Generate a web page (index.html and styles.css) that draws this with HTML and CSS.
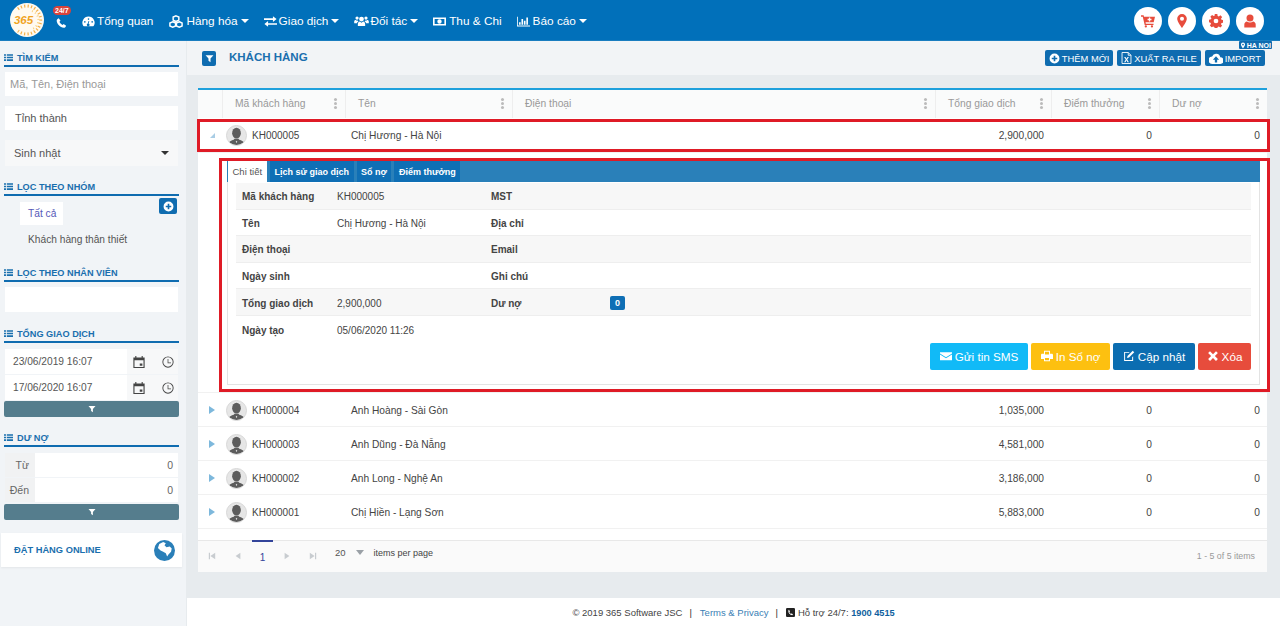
FILE: index.html
```html
<!DOCTYPE html>
<html lang="vi">
<head>
    <meta charset="UTF-8">
    <meta name="viewport" content="width=device-width, initial-scale=1.0">
    <title>Khách hàng</title>
    <link rel="stylesheet" href="styles.css">
</head>
<body>
    <svg class="sprite" aria-hidden="true">
        <symbol id="i-list" viewBox="0 0 16 16"><path d="M0 2h3.500v3H0zM5 2h11v3H5zM0 6.500h3.500v3H0zM5 6.500h11v3H5zM0 11h3.500v3H0zM5 11h11v3H5z"/></symbol>
        <symbol id="i-filter" viewBox="0 0 16 16"><path d="M1 2h14L9.800 8v6.500L6.200 12V8z"/></symbol>
        <symbol id="i-plus" viewBox="0 0 16 16"><path fill-rule="evenodd" d="M8 .8a7.200 7.200 0 1 0 0 14.400A7.200 7.200 0 0 0 8 .8zM6.800 4h2.400v2.800H12v2.400H9.200V12H6.800V9.200H4V6.800h2.800z"/></symbol>
        <symbol id="i-gauge" viewBox="0 0 16 16"><path fill-rule="evenodd" d="M8 2a7.500 7.500 0 0 0-6.500 11.300c.2.300.4.400.7.400h11.600c.3 0 .5-.1.700-.4A7.500 7.500 0 0 0 8 2zM3.500 9.500a1 1 0 1 1 0-2 1 1 0 0 1 0 2zM8 6a1 1 0 1 1 0-2 1 1 0 0 1 0 2zm1.300 5.600a1.700 1.700 0 1 1-2.200-1.200l.9-3 1 .3-.9 3c.5.100.9.400 1.200.9zM12.500 9.500a1 1 0 1 1 0-2 1 1 0 0 1 0 2z"/></symbol>
        <symbol id="i-cubes" viewBox="0 0 18 16"><path fill="none" stroke="currentColor" stroke-width="1.800" d="M9 1l3.500 1.500v3.800L9 7.800 5.500 6.300V2.500zM5 8.300l3.500 1.500v3.800L5 15l-3.500-1.400V9.800zM13 8.300l3.500 1.500v3.800L13 15l-3.500-1.400V9.800z"/></symbol>
        <symbol id="i-exchange" viewBox="0 0 16 16"><path d="M0 4h11V1.500L15.500 5 11 8.500V6H0zM16 10H5V7.500L.5 11 5 14.500V12h11z"/></symbol>
        <symbol id="i-users" viewBox="0 0 18 16"><circle cx="9" cy="5" r="3"/><circle cx="3.500" cy="3.800" r="2"/><circle cx="14.500" cy="3.800" r="2"/><path d="M4.500 13.500V11c0-1.800 1.200-3 2.500-3l2 1.500L11 8c1.300 0 2.500 1.200 2.500 3v2.500zM0 10V8c0-1 .8-1.800 1.700-1.800l1.800 1 1-.3c.2.400.4.700.7 1C4 8.500 3.400 9.200 3.400 10zM18 10V8c0-1-.8-1.800-1.700-1.800l-1.800 1-1-.3c-.2.400-.4.700-.7 1 1.200.6 1.800 1.300 1.800 2.100z"/></symbol>
        <symbol id="i-money" viewBox="0 0 16 16"><path fill-rule="evenodd" d="M0 3h16v10H0zm2 2v6h12V5zm6 .300a2.700 2.700 0 1 1 0 5.400 2.700 2.700 0 0 1 0-5.400z"/></symbol>
        <symbol id="i-chart" viewBox="0 0 16 16"><path d="M0 2h1v11h15v1H0zM2.500 9h2v3h-2zM5.500 5h2v7h-2zM8.500 7h2v5h-2zM11.500 3h2v9h-2z"/></symbol>
        <symbol id="i-phone" viewBox="0 0 16 16"><path d="M4 1l2.600 3.600L5 6.200c.8 2 2.200 3.500 4.600 4.800l1.500-1.500 3.600 2.500c-.4 1.600-1.800 3-3.300 3C6 15 1 9 1 4.500 1 3 2.400 1.500 4 1z"/></symbol>
        <symbol id="i-cart" viewBox="0 0 16 16"><path d="M0 1.500h3l.4 1.500H16l-1.500 6.500H5.200l.3 1.500h8.800v1.500H4.200L2 3H0zM9 4v1.500H7.500V7H9v1.500h1.500V7H12V5.500h-1.500V4z"/><circle cx="5.500" cy="14.200" r="1.300"/><circle cx="12.500" cy="14.200" r="1.300"/></symbol>
        <symbol id="i-marker" viewBox="0 0 16 16"><path fill-rule="evenodd" d="M8 0a5.500 5.500 0 0 0-5.500 5.500C2.500 9 8 16 8 16s5.500-7 5.500-10.500A5.500 5.500 0 0 0 8 0zm0 3.200a2.300 2.300 0 1 1 0 4.600 2.300 2.300 0 0 1 0-4.600z"/></symbol>
        <symbol id="i-cog" viewBox="0 0 16 16"><path fill-rule="evenodd" d="M6.500 0h3l.4 2.200 1.300.6L13 1.500l2 2-1.300 1.800.6 1.300 2.200.4v3l-2.200.4-.6 1.300 1.300 1.800-2 2-1.800-1.300-1.300.6-.4 2.200h-3l-.4-2.200-1.300-.6L3 15l-2-2 1.300-1.800-.6-1.300L0 9.500v-3l2.200-.4.6-1.300L1.500 3l2-2 1.800 1.300 1.300-.6zM8 5.300a2.700 2.700 0 1 0 0 5.400 2.700 2.700 0 0 0 0-5.400z"/></symbol>
        <symbol id="i-user" viewBox="0 0 16 16"><circle cx="8" cy="4.500" r="4"/><path d="M1.500 15.500V12c0-2 1.500-3.500 3-3.500C5.500 9.300 6.700 9.800 8 9.800s2.500-.5 3.500-1.300c1.500 0 3 1.500 3 3.500v3.500z"/></symbol>
        <symbol id="i-excel" viewBox="0 0 16 18"><path fill="none" stroke="currentColor" stroke-width="1.300" d="M1.500 1h9l4 4v12h-13zM10.500 1v4h4"/><path d="M4.500 7.500h2l1.500 2.500 1.500-2.500h2L9 11l2.500 4h-2L8 12.300 6.500 15h-2L7 11z"/></symbol>
        <symbol id="i-cloud" viewBox="0 0 18 14"><path fill-rule="evenodd" d="M14.500 5.500A5.500 5.500 0 0 0 4 4.300 4.500 4.500 0 0 0 4.500 14h10a4.200 4.200 0 0 0 0-8.500zM9 4l4 4.500h-2.500V12h-3V8.500H5z"/></symbol>
        <symbol id="i-calendar" viewBox="0 0 16 16"><path fill-rule="evenodd" d="M3 0h1.500v2h7V0H13v2h2.500v14H.5V2H3zM2 5.500V14.500h12V5.500zM9 10h3.500v3H9z"/></symbol>
        <symbol id="i-clock" viewBox="0 0 16 16"><path fill-rule="evenodd" d="M8 .5a7.500 7.500 0 1 0 0 15 7.500 7.500 0 0 0 0-15zm0 1.200a6.300 6.300 0 1 1 0 12.600A6.300 6.300 0 0 1 8 1.700zM7.500 4h1v4.500H12v1H7.500z"/></symbol>
        <symbol id="i-globe" viewBox="0 0 16 16"><circle cx="8" cy="8" r="8"/><path fill="white" d="M4 3l3-1.500 2 1-1 1.500 1.500 1.500 2.500-.5 1.500 1.500-.5 2.500-2 2-1 1.500-1-2.500-2-1L5 8 3 6z"/></symbol>
        <symbol id="i-mail" viewBox="0 0 16 16"><path d="M0 3h16v1.500L8 9.500 0 4.500zM0 6l8 5 8-5v7.500H0z"/></symbol>
        <symbol id="i-print" viewBox="0 0 16 16"><path fill-rule="evenodd" d="M4 1h8v4h2.500c.8 0 1.500.7 1.500 1.500V12h-4v3H4v-3H0V6.500C0 5.700.7 5 1.500 5H4zm1.300 1.300V6h5.400V2.300zm0 8.200v3.200h5.400v-3.200z"/></symbol>
        <symbol id="i-edit" viewBox="0 0 16 16"><path d="M2.500 2.500H9L7.700 3.800H2.800v9.400h9.400V9.500l1.300-1.300v6.300h-12v-12zM13 1l2 2-7 7-2.600.6L6 8z"/></symbol>
        <symbol id="i-times" viewBox="0 0 16 16"><path d="M4 1.500L8 5.500l4-4L14.500 4l-4 4 4 4-2.500 2.500-4-4-4 4L1.500 12l4-4-4-4z"/></symbol>
        <symbol id="i-face" viewBox="0 0 24 24"><ellipse cx="12" cy="9" rx="5.500" ry="6.800"/><path d="M1 24c1-5 5-5.500 7.500-6.500l1-1.500h5l1 1.500c2.500 1 6.500 1.500 7.500 6.500z"/><path fill="#e6e6e6" d="M11 20l1-1.500 1 1.500-1 1.500z"/></symbol>
        <symbol id="i-first" viewBox="0 0 10 10"><path d="M1 1h1.500v8H1zM9 1v8L3 5z"/></symbol>
        <symbol id="i-prev" viewBox="0 0 10 10"><path d="M8 1v8L2 5z"/></symbol>
        <symbol id="i-next" viewBox="0 0 10 10"><path d="M2 1v8l6-4z"/></symbol>
        <symbol id="i-last" viewBox="0 0 10 10"><path d="M9 1H7.500v8H9zM1 1v8l6-4z"/></symbol>
        <symbol id="i-support" viewBox="0 0 16 16"><path fill-rule="evenodd" d="M2 0h12a2 2 0 0 1 2 2v12a2 2 0 0 1-2 2H2a2 2 0 0 1-2-2V2a2 2 0 0 1 2-2zm3 3L4 5c0 4 3 8 7 8l1.500-1.500-2.500-2-1 1C7.500 10 6.500 9 6 7.500l1-1L5.500 3z"/></symbol>
    </svg>

    <header class="topbar">
        <div class="logo">
            <svg class="logo-dots" viewBox="0 0 34 34"><path fill="none" stroke="#f4b04a" stroke-width="3" stroke-dasharray="1.200 2.200" d="M8 6A14 14 0 1 1 8 28"/><path fill="none" stroke="#f9d27f" stroke-width="2" stroke-dasharray="1 2.500" d="M22 8A9.500 9.500 0 0 1 22 26"/></svg>
            <span class="logo-text">365</span>
        </div>
        <div class="hotline">
            <svg class="hotline-icon"><use href="#i-phone"></use></svg>
            <span class="hotline-badge">24/7</span>
        </div>
        <nav class="nav">
            <a class="nav-item"><svg class="nav-icon"><use href="#i-gauge"></use></svg>Tổng quan</a>
            <a class="nav-item"><svg class="nav-icon wide"><use href="#i-cubes"></use></svg>Hàng hóa<i class="caret"></i></a>
            <a class="nav-item"><svg class="nav-icon"><use href="#i-exchange"></use></svg>Giao dịch<i class="caret"></i></a>
            <a class="nav-item"><svg class="nav-icon users"><use href="#i-users"></use></svg>Đối tác<i class="caret"></i></a>
            <a class="nav-item"><svg class="nav-icon money"><use href="#i-money"></use></svg>Thu &amp; Chi</a>
            <a class="nav-item"><svg class="nav-icon money"><use href="#i-chart"></use></svg>Báo cáo<i class="caret"></i></a>
        </nav>
        <div class="top-actions">
            <span class="round-btn"><svg><use href="#i-cart"></use></svg></span>
            <span class="round-btn"><svg><use href="#i-marker"></use></svg></span>
            <span class="round-btn"><svg><use href="#i-cog"></use></svg></span>
            <span class="round-btn"><svg><use href="#i-user"></use></svg></span>
        </div>
    </header>

    <div class="layout">
        <aside class="sidebar">
            <h3 class="side-title"><svg><use href="#i-list"></use></svg>TÌM KIẾM</h3>
            <div class="field field-search">Mã, Tên, Điện thoại</div>
            <div class="field field-city">Tỉnh thành</div>
            <div class="field field-birthday">Sinh nhật<i class="caret dark"></i></div>

            <h3 class="side-title group-title"><svg><use href="#i-list"></use></svg>LỌC THEO NHÓM</h3>
            <div class="group-body">
                <ul class="group-list">
                    <li class="group-item active">Tất cả</li>
                    <li class="group-item">Khách hàng thân thiết</li>
                </ul>
                <span class="group-add"><svg><use href="#i-plus"></use></svg></span>
            </div>

            <h3 class="side-title staff-title"><svg><use href="#i-list"></use></svg>LỌC THEO NHÂN VIÊN</h3>
            <div class="field field-staff"></div>

            <h3 class="side-title total-title"><svg><use href="#i-list"></use></svg>TỔNG GIAO DỊCH</h3>
            <div class="date-row">
                <span class="date-value">23/06/2019 16:07</span>
                <svg class="date-icon"><use href="#i-calendar"></use></svg>
                <svg class="date-icon"><use href="#i-clock"></use></svg>
            </div>
            <div class="date-row">
                <span class="date-value">17/06/2020 16:07</span>
                <svg class="date-icon"><use href="#i-calendar"></use></svg>
                <svg class="date-icon"><use href="#i-clock"></use></svg>
            </div>
            <button class="filter-btn"><svg><use href="#i-filter"></use></svg></button>

            <h3 class="side-title debt-title"><svg><use href="#i-list"></use></svg>DƯ NỢ</h3>
            <div class="range-row"><span class="range-label">Từ</span><span class="range-value">0</span></div>
            <div class="range-row"><span class="range-label">Đến</span><span class="range-value">0</span></div>
            <button class="filter-btn"><svg><use href="#i-filter"></use></svg></button>

            <div class="online-card">
                <span>ĐẶT HÀNG ONLINE</span>
                <svg><use href="#i-globe"></use></svg>
            </div>
        </aside>

        <main class="main">
            <div class="page-bar">
                <span class="page-filter"><svg><use href="#i-filter"></use></svg></span>
                <h2 class="page-title">KHÁCH HÀNG</h2>
                <div class="page-actions">
                    <span class="branch-badge"><svg><use href="#i-marker"></use></svg>HA NOI</span>
                    <a class="action-btn"><svg><use href="#i-plus"></use></svg>THÊM MỚI</a>
                    <a class="action-btn"><svg class="tall"><use href="#i-excel"></use></svg>XUẤT RA FILE</a>
                    <a class="action-btn"><svg class="cloud"><use href="#i-cloud"></use></svg>IMPORT</a>
                </div>
            </div>

            <section class="grid-card">
                <div class="row head">
                    <div class="cell"></div>
                    <div class="cell">Mã khách hàng<i class="dots"></i></div>
                    <div class="cell">Tên<i class="dots"></i></div>
                    <div class="cell">Điện thoại<i class="dots"></i></div>
                    <div class="cell">Tổng giao dịch<i class="dots"></i></div>
                    <div class="cell">Điểm thưởng<i class="dots"></i></div>
                    <div class="cell">Dư nợ<i class="dots"></i></div>
                </div>

                <div class="row marked">
                    <div class="cell arrow-cell"><i class="arrow open"></i></div>
                    <div class="cell code"><span class="avatar"><svg><use href="#i-face"></use></svg></span>KH000005</div>
                    <div class="cell">Chị Hương - Hà Nội</div>
                    <div class="cell"></div>
                    <div class="cell num">2,900,000</div>
                    <div class="cell num">0</div>
                    <div class="cell num">0</div>
                </div>

                <div class="detail">
                    <div class="tabs">
                        <span class="tab active">Chi tiết</span>
                        <span class="tab">Lịch sử giao dịch</span>
                        <span class="tab">Sổ nợ</span>
                        <span class="tab">Điểm thưởng</span>
                    </div>
                    <div class="tab-panel">
                        <div class="info-row"><b>Mã khách hàng</b><span>KH000005</span><b>MST</b><span></span></div>
                        <div class="info-row"><b>Tên</b><span>Chị Hương - Hà Nội</span><b>Địa chỉ</b><span></span></div>
                        <div class="info-row"><b>Điện thoại</b><span></span><b>Email</b><span></span></div>
                        <div class="info-row"><b>Ngày sinh</b><span></span><b>Ghi chú</b><span></span></div>
                        <div class="info-row"><b>Tổng giao dịch</b><span>2,900,000</span><b>Dư nợ</b><span><em class="debt-badge">0</em></span></div>
                        <div class="info-row"><b>Ngày tạo</b><span>05/06/2020 11:26</span><b></b><span></span></div>
                        <div class="detail-actions">
                            <a class="btn btn-sms"><svg><use href="#i-mail"></use></svg>Gửi tin SMS</a>
                            <a class="btn btn-print"><svg><use href="#i-print"></use></svg>In Sổ nợ</a>
                            <a class="btn btn-update"><svg><use href="#i-edit"></use></svg>Cập nhật</a>
                            <a class="btn btn-delete"><svg><use href="#i-times"></use></svg>Xóa</a>
                        </div>
                    </div>
                </div>

                <div class="row">
                    <div class="cell arrow-cell"><i class="arrow"></i></div>
                    <div class="cell code"><span class="avatar"><svg><use href="#i-face"></use></svg></span>KH000004</div>
                    <div class="cell">Anh Hoàng - Sài Gòn</div>
                    <div class="cell"></div>
                    <div class="cell num">1,035,000</div>
                    <div class="cell num">0</div>
                    <div class="cell num">0</div>
                </div>
                <div class="row">
                    <div class="cell arrow-cell"><i class="arrow"></i></div>
                    <div class="cell code"><span class="avatar"><svg><use href="#i-face"></use></svg></span>KH000003</div>
                    <div class="cell">Anh Dũng - Đà Nẵng</div>
                    <div class="cell"></div>
                    <div class="cell num">4,581,000</div>
                    <div class="cell num">0</div>
                    <div class="cell num">0</div>
                </div>
                <div class="row">
                    <div class="cell arrow-cell"><i class="arrow"></i></div>
                    <div class="cell code"><span class="avatar"><svg><use href="#i-face"></use></svg></span>KH000002</div>
                    <div class="cell">Anh Long - Nghệ An</div>
                    <div class="cell"></div>
                    <div class="cell num">3,186,000</div>
                    <div class="cell num">0</div>
                    <div class="cell num">0</div>
                </div>
                <div class="row">
                    <div class="cell arrow-cell"><i class="arrow"></i></div>
                    <div class="cell code"><span class="avatar"><svg><use href="#i-face"></use></svg></span>KH000001</div>
                    <div class="cell">Chị Hiền - Lạng Sơn</div>
                    <div class="cell"></div>
                    <div class="cell num">5,883,000</div>
                    <div class="cell num">0</div>
                    <div class="cell num">0</div>
                </div>

                <div class="pager">
                    <svg class="pager-icon"><use href="#i-first"></use></svg>
                    <svg class="pager-icon"><use href="#i-prev"></use></svg>
                    <span class="pager-current">1</span>
                    <svg class="pager-icon"><use href="#i-next"></use></svg>
                    <svg class="pager-icon"><use href="#i-last"></use></svg>
                    <span class="pager-size">20<i class="caret gray"></i></span>
                    <span class="pager-label">items per page</span>
                    <span class="pager-info">1 - 5 of 5 items</span>
                </div>
            </section>

            <footer class="footer">
                <span>© 2019 365 Software JSC</span>
                <span class="sep">|</span>
                <a class="footer-link">Terms &amp; Privacy</a>
                <span class="sep">|</span>
                <svg><use href="#i-support"></use></svg>
                <span class="footer-hotline">Hỗ trợ 24/7: <b>1900 4515</b></span>
            </footer>
        </main>
    </div>
</body>
</html>
```

FILE: styles.css
```css
* {
    box-sizing: border-box;
}
html, body {
    height: 100%;
}
body {
    margin: 0;
    display: flex;
    flex-direction: column;
    overflow: hidden;
    font-family: "Liberation Sans", Arial, sans-serif;
    font-size: 10px;
    color: #444;
    background-color: #e7ebee;
}
.sprite {
    display: none;
}
svg {
    fill: currentColor;
}

/* top bar */
.topbar {
    display: flex;
    align-items: center;
    flex: none;
    height: 41px;
    padding: 0 16px 0 10px;
    color: white;
    background-color: #0170ba;
    border-bottom: 1px solid #1a7dbf;
}
.logo {
    display: flex;
    align-items: center;
    justify-content: center;
    position: relative;
    width: 34px;
    height: 34px;
    padding-right: 7px;
    border-radius: 50%;
    background-color: #fffaf0;
}
.logo-dots {
    position: absolute;
    inset: 0;
}
.logo-text {
    position: relative;
    font-size: 11.500px;
    font-weight: bold;
    font-style: italic;
    color: #f0a31e;
}
.hotline {
    position: relative;
    width: 16px;
    height: 20px;
    margin-left: 11px;
}
.hotline-icon {
    display: block;
    width: 11px;
    height: 12px;
    margin: 7px 0 0 1px;
}
.hotline-badge {
    position: absolute;
    top: -4px;
    left: -2px;
    padding: 0 2px;
    font-size: 7px;
    line-height: 9px;
    font-weight: bold;
    border-radius: 5px;
    background-color: #d9433b;
}
.nav {
    display: flex;
    gap: 15px;
    margin: 2px 0 0 11px;
}
.nav-item {
    display: flex;
    align-items: center;
    font-size: 11.800px;
    line-height: 16px;
}
.nav-icon {
    width: 13px;
    height: 13px;
    margin-right: 2px;
}
.nav-icon.wide {
    width: 16px;
}
.nav-icon.users {
    width: 15px;
    margin-right: 1px;
}
.nav-icon.money {
    margin-right: 3px;
}
.caret {
    width: 0;
    height: 0;
    margin-left: 3px;
    border: 4px solid transparent;
    border-top-color: white;
    border-bottom: 0;
}
.caret.dark {
    border-top-color: #333;
}
.caret.gray {
    margin-left: 10px;
    border-top-color: #9aa0a6;
    border-width: 5px 4px 0;
}
.top-actions {
    display: flex;
    gap: 6px;
    margin: 2px 0 0 auto;
}
.round-btn {
    display: flex;
    align-items: center;
    justify-content: center;
    width: 28px;
    height: 28px;
    border-radius: 50%;
    color: #e74c3c;
    background-color: white;
}
.round-btn svg {
    width: 14px;
    height: 14px;
}

.layout {
    display: flex;
    flex: 1;
    min-height: 0;
}

/* left filters */
.sidebar {
    flex: none;
    width: 186px;
    padding: 8px 7px 0 4px;
    background-color: #f1f4f7;
}
.side-title {
    display: flex;
    align-items: center;
    height: 18px;
    margin: 0;
    padding-top: 1px;
    font-size: 9.200px;
    color: #1a6fae;
    border-bottom: 2px solid #0f6cb0;
}
.side-title svg {
    width: 9px;
    height: 9px;
    margin-right: 4px;
}
.group-title {
    margin-top: 12px;
}
.staff-title {
    margin-top: 14px;
}
.total-title {
    margin-top: 13px;
}
.debt-title {
    margin-top: 12px;
}
.field {
    display: flex;
    align-items: center;
    justify-content: space-between;
    margin: 0 1px;
    font-size: 11px;
    color: #555;
    background-color: white;
}
.field-search {
    height: 24px;
    margin-top: 5px;
    padding: 0 5px;
    color: #999;
}
.field-city {
    height: 24px;
    margin-top: 10px;
    padding: 0 10px;
}
.field-birthday {
    height: 26px;
    margin-top: 10px;
    padding: 0 9px;
    background-color: #f7f8f9;
}
.group-body {
    display: flex;
    justify-content: space-between;
    align-items: flex-start;
}
.group-list {
    margin: 6px 0 0;
    padding: 0 0 0 16px;
    list-style: none;
}
.group-item {
    display: flex;
    align-items: center;
    height: 22px;
    padding: 0 8px;
    font-size: 10.200px;
    white-space: nowrap;
    color: #555;
}
.group-item.active {
    width: 43px;
    height: 23px;
    margin-bottom: 3px;
    color: #5558b8;
    background-color: white;
}
.group-add {
    display: flex;
    align-items: center;
    justify-content: center;
    width: 18px;
    height: 16px;
    margin: 2px 2px 0 0;
    color: white;
    border-radius: 2px;
    background-color: #0f6cb0;
}
.group-add svg {
    width: 11px;
    height: 11px;
}
.field-staff {
    height: 25px;
    margin-top: 5px;
}
.date-row {
    display: flex;
    align-items: center;
    height: 25px;
    margin: 0 1px 1px;
    color: #555;
    background-color: #f7f8f9;
}
.total-title + .date-row {
    margin-top: 6px;
}
.date-row + .date-row {
    margin-top: 1px;
}
.date-value {
    display: flex;
    align-items: center;
    width: 122px;
    height: 100%;
    padding-left: 8px;
    font-size: 10.200px;
    background-color: white;
}
.date-icon {
    width: 12px;
    height: 12px;
    margin-left: 6px;
    color: #444;
}
.date-icon + .date-icon {
    margin-left: 17px;
}
.filter-btn {
    display: flex;
    align-items: center;
    justify-content: center;
    width: 100%;
    height: 16px;
    padding: 0;
    color: white;
    border: 0;
    border-radius: 2px;
    background-color: #557d8d;
}
.filter-btn svg {
    width: 8px;
    height: 8px;
}
.range-row {
    display: flex;
    height: 24px;
    margin: 0 1px 1px;
    font-size: 10.500px;
    background-color: #f1f2f3;
}
.range-row + .range-row {
    margin-bottom: 2px;
}
.debt-title + .range-row {
    margin-top: 6px;
}
.range-label {
    display: flex;
    align-items: center;
    justify-content: flex-end;
    width: 30px;
    padding-right: 6px;
    color: #666;
}
.range-value {
    flex: 1;
    padding-right: 5px;
    line-height: 24px;
    text-align: right;
    color: #666;
    background-color: white;
}
.online-card {
    display: flex;
    align-items: center;
    justify-content: space-between;
    height: 34px;
    margin: 13px -3px 0;
    padding: 0 7px 0 13px;
    font-size: 9.300px;
    font-weight: bold;
    color: #1a6fae;
    background-color: white;
    box-shadow: 0 1px 2px rgba(0,0,0,0.06);
}
.online-card svg {
    width: 21px;
    height: 21px;
    color: #2a7fb8;
}

/* main column */
.main {
    display: flex;
    flex: 1;
    flex-direction: column;
    min-width: 0;
    margin-left: 1px;
}
.page-bar {
    display: flex;
    align-items: center;
    position: relative;
    flex: none;
    height: 34px;
    padding: 0 15px;
    background-color: #f2f4f6;
}
.page-filter {
    display: flex;
    align-items: center;
    justify-content: center;
    width: 14px;
    height: 15px;
    color: white;
    border-radius: 2px;
    background-color: #0f6cb0;
}
.page-filter svg {
    width: 9px;
    height: 9px;
}
.page-title {
    margin: 0 0 2px 13px;
    font-size: 11.500px;
    color: #1a6fae;
}
.page-actions {
    display: flex;
    gap: 4px;
    margin-left: auto;
}
.action-btn {
    display: flex;
    align-items: center;
    height: 16px;
    padding: 0 4px;
    font-size: 9.400px;
    color: white;
    border-radius: 2px;
    background-color: #0f6cb0;
}
.action-btn svg {
    width: 11px;
    height: 11px;
    margin-right: 2px;
}
.action-btn svg.tall {
    height: 14px;
    margin-right: 2px;
}
.action-btn svg.cloud {
    width: 14px;
    margin-right: 2px;
}
.branch-badge {
    display: flex;
    align-items: center;
    position: absolute;
    top: 0;
    right: 8px;
    height: 8px;
    padding: 0 1px;
    font-size: 7px;
    font-weight: bold;
    color: white;
    border-radius: 1px;
    background-color: #0f6cb0;
}
.branch-badge svg {
    width: 6px;
    height: 7px;
    margin-right: 1px;
}

/* grid */
.grid-card {
    position: relative;
    flex: none;
    height: 484px;
    margin: 13px 13px 0 11px;
    background-color: white;
    border-top: 2px solid #1ea0dc;
}
.row {
    display: grid;
    grid-template-columns: 24px 123px 167px 423px 116px 108px 108px;
    position: relative;
    height: 34px;
    font-size: 10.200px;
    border-bottom: 1px solid #f1f1f1;
}
.row .cell {
    display: flex;
    align-items: center;
    padding: 1px 7px 0 6px;
    color: #444;
}
.row.marked .cell {
    padding-top: 0;
}
.row.head {
    height: 28px;
    background-color: #fafbfb;
    border-bottom: 0;
}
.row.head .cell {
    justify-content: space-between;
    padding: 0 8px 2px 12px;
    font-size: 10.300px;
    color: #999;
    border-left: 1px solid #eeeeee;
}
.row.head .cell:first-child {
    border-left: 0;
}
.dots {
    width: 3px;
    height: 3px;
    border-radius: 50%;
    background-color: #bbb;
    box-shadow: 0 -4px 0 #bbb, 0 4px 0 #bbb;
}
.row.marked {
    height: 35px;
}
.row.marked::after,
.detail::after {
    content: "";
    position: absolute;
    border: 3px solid #df1b26;
    pointer-events: none;
}
.row.marked::after {
    inset: 1px -3px 0 -1px;
}
.row .arrow-cell {
    justify-content: flex-end;
    padding: 0 7px 0 0;
}
.arrow {
    width: 0;
    height: 0;
    border-left: 6px solid #7db8dc;
    border-top: 4px solid transparent;
    border-bottom: 4px solid transparent;
}
.arrow.open {
    border: 0;
    border-left: 5px solid transparent;
    border-bottom: 5px solid #a9cde5;
}
.row .code {
    padding-left: 4px;
    font-size: 10px;
}
.avatar {
    display: flex;
    align-items: flex-end;
    justify-content: center;
    overflow: hidden;
    width: 21px;
    height: 21px;
    margin-right: 5px;
    color: #5c5c5c;
    border-radius: 50%;
    background-color: #e6e6e6;
    border: 1px solid #d8d8d8;
}
.avatar svg {
    width: 19px;
    height: 19px;
}
.row .num {
    justify-content: flex-end;
}

/* expanded customer */
.detail {
    position: relative;
    height: 240px;
    padding: 8px 7px 8px 29px;
    border-bottom: 1px solid #f1f1f1;
}
.detail::after {
    inset: 5px -3px 0 21px;
}
.tabs {
    display: flex;
    gap: 3px;
    height: 21px;
    padding-left: 1px;
    background-color: #2a80b9;
}
.tab {
    display: flex;
    align-items: center;
    padding: 0 4.500px;
    font-size: 9px;
    font-weight: bold;
    color: white;
    background-color: #0f6fb5;
}
.tab.active {
    width: 39px;
    font-size: 9.500px;
    font-weight: normal;
    color: #555;
    background-color: white;
}
.tab-panel {
    height: 203px;
    padding: 1px 8px 0;
    border: 1px solid #e3e3e3;
    border-top: 0;
}
.info-row {
    display: grid;
    grid-template-columns: 95px 154px 119px 1fr;
    align-items: center;
    height: 26.600px;
    padding: 2px 0 0 6px;
    border-bottom: 1px solid #eeeeee;
}
.info-row:nth-child(odd) {
    background-color: #f7f7f7;
}
.info-row:nth-child(6) {
    border-bottom: 0;
}
.info-row b {
    font-size: 10px;
    color: #444;
}
.debt-badge {
    display: inline-block;
    width: 15px;
    height: 14px;
    font-size: 9px;
    font-style: normal;
    font-weight: bold;
    line-height: 14px;
    text-align: center;
    color: white;
    border-radius: 2px;
    background-color: #0f6fb5;
}
.detail-actions {
    display: flex;
    justify-content: flex-end;
    gap: 3px;
}
.btn {
    display: flex;
    align-items: center;
    justify-content: center;
    height: 27px;
    font-size: 11.700px;
    color: white;
    border-radius: 2px;
}
.btn svg {
    width: 12px;
    height: 12px;
    margin-right: 3px;
}
.btn-sms {
    width: 98px;
    background-color: #11baf7;
}
.btn-print {
    width: 79px;
    background-color: #fdc010;
}
.btn-update {
    width: 82px;
    background-color: #0b6db1;
}
.btn-delete {
    width: 53px;
    background-color: #e74c3c;
}

/* pager */
.pager {
    display: flex;
    align-items: flex-start;
    position: absolute;
    left: 0;
    right: 0;
    bottom: 0;
    height: 32px;
    padding-left: 10px;
    font-size: 9.500px;
    color: #555;
    background-color: #fafafa;
    border-top: 1px solid #e8e8e8;
}
.pager-icon {
    width: 8px;
    height: 8px;
    margin: 11px 18px 0 0;
    color: #c8ccd0;
}
.pager-current {
    width: 21px;
    height: 31px;
    margin: -1px 10px 0 -8px;
    padding-top: 10px;
    text-align: center;
    font-size: 10px;
    color: #33449a;
    border-top: 2px solid #33449a;
}
.pager-size {
    display: flex;
    align-items: center;
    margin: 6px 0 0;
}
.pager-label {
    margin: 7px 0 0 10px;
    font-size: 9px;
    color: #444;
}
.pager-info {
    margin: 10px 12px 0 auto;
    font-size: 8.800px;
    color: #999;
}

/* footer */
.footer {
    display: flex;
    align-items: center;
    justify-content: center;
    flex: none;
    gap: 5px;
    height: 28px;
    margin-top: auto;
    font-size: 9.500px;
    color: #444;
    background-color: white;
}
.footer .sep {
    margin: 0 3px 0 2px;
    color: #333;
}
.footer svg {
    width: 9px;
    height: 9px;
    color: #222;
}
.footer-link {
    color: #3b7fb5;
}
.footer-hotline {
    margin-left: -2px;
}
.footer b {
    font-size: 9.200px;
    color: #0f5f9e;
}
```
